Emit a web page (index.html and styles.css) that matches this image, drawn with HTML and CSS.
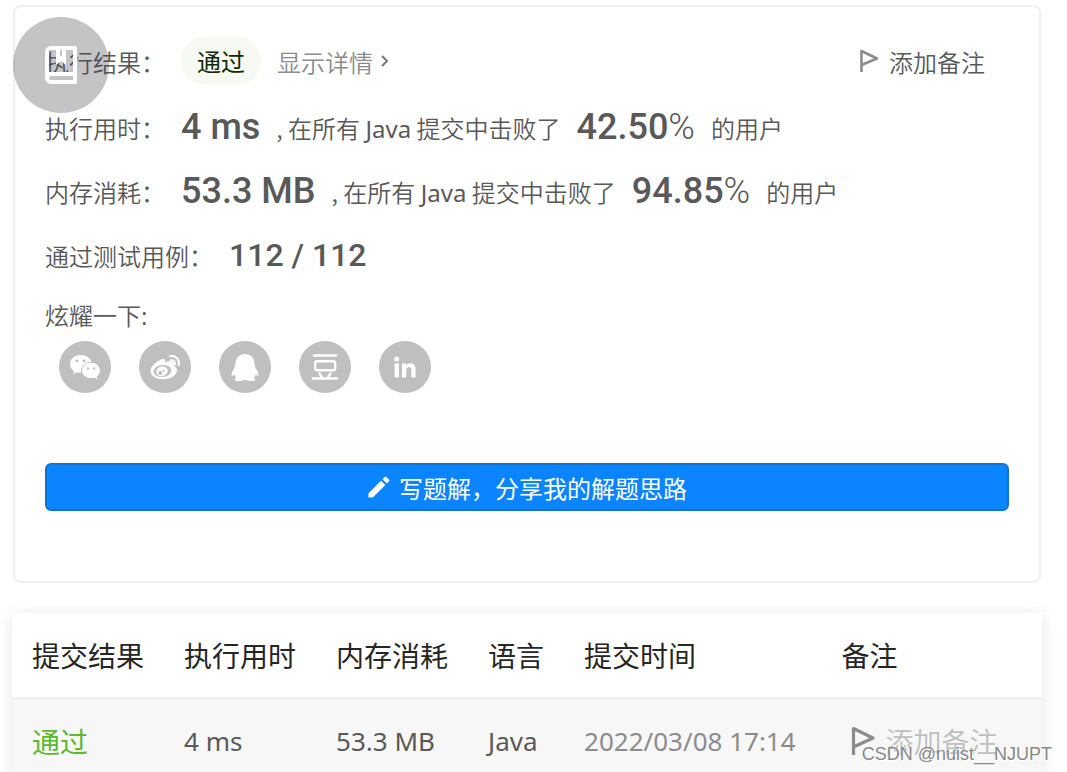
FILE: index.html
```html
<!DOCTYPE html>
<html lang="zh-CN">
<head>
    <meta charset="UTF-8">
    <meta name="viewport" content="width=device-width, initial-scale=1.0">
    <title>提交记录</title>
    <link rel="stylesheet" href="styles.css">
</head>
<body>
    <section class="result">
        <div class="row first">
            <span class="label">执行结果：</span>
            <span class="status">通过</span>
            <a class="detail" href="#">显示详情
                <svg width="8" height="14" viewBox="0 0 8 14"><path d="M1 2l5 5-5 5" fill="none" stroke="#777" stroke-width="2"/></svg>
            </a>
            <button class="remark" type="button">
                <svg width="20" height="26" viewBox="0 0 20 26"><path d="M2.500 24V3L18 10.500 2.500 17" fill="none" stroke="#8c8c8c" stroke-width="2.600" stroke-linejoin="round"/></svg>
                添加备注
            </button>
        </div>
        <div class="row">
            <span class="label">执行用时：</span>
            <strong>4 ms</strong>
            <span>, 在所有 <span class="lang">Java</span> 提交中击败了</span>
            <strong>42.50<i>%</i></strong>
            <span>的用户</span>
        </div>
        <div class="row">
            <span class="label">内存消耗：</span>
            <strong>53.3 MB</strong>
            <span>, 在所有 <span class="lang">Java</span> 提交中击败了</span>
            <strong>94.85<i>%</i></strong>
            <span>的用户</span>
        </div>
        <div class="row">
            <span class="label">通过测试用例：</span>
            <strong class="cases">112 / 112</strong>
        </div>
        <div class="share-title">炫耀一下:</div>
        <div class="share">
            <a href="#" aria-label="微信">
                <svg viewBox="0 0 52 52">
                    <path d="M21.500 14c-6 0-10.500 4-10.500 9 0 3 1.500 5.500 4 7l-1 3.500 4-2.200c1.300.4 2.600.6 4 .5-1-6 4-11 10.500-11C31.300 16.800 27 14 21.500 14z"/>
                    <path d="M32 21.800c-5 0-9 3.400-9 7.700s4 7.600 9 7.600c1.200 0 2.300-.1 3.300-.5l3.200 1.900-.8-3c2-1.400 3.300-3.500 3.300-6 0-4.300-4-7.700-9-7.700z"/>
                    <g fill="#bfbfbf"><circle cx="18" cy="20" r="1.400"/><circle cx="25" cy="20" r="1.400"/><circle cx="29" cy="27.500" r="1.200"/><circle cx="35" cy="27.500" r="1.200"/></g>
                </svg>
            </a>
            <a href="#" aria-label="微博">
                <svg viewBox="0 0 52 52">
                    <path d="M21 19c3-1.600 5-1.300 5.300.5.200 1-.2 2-.2 2 3-1.300 7-2 8.500.2.800 1.200.2 2.900 0 3.400 2 .7 3.400 2 3.400 4.200 0 5-6.500 9-14 9-7 0-12.500-3.300-12.500-8.500C11.500 26 16 21.500 21 19z"/>
                    <ellipse cx="23.500" cy="30" rx="9" ry="6" transform="rotate(-7 23.500 30)" fill="#bfbfbf"/>
                    <ellipse cx="23" cy="30.300" rx="5.800" ry="4.800" transform="rotate(-20 23 30.300)"/>
                    <circle cx="21.300" cy="32" r="2" fill="#bfbfbf"/><circle cx="24.500" cy="30" r="1" fill="#bfbfbf"/>
                    <path d="M31 15.300c5.500-1.400 10 3.300 8.600 9M31.500 19.500c3-.7 5 1.400 4.300 4.200" fill="none" stroke="#fff" stroke-width="2" stroke-linecap="round"/>
                </svg>
            </a>
            <a href="#" aria-label="QQ">
                <svg viewBox="0 0 52 52"><path d="M26 13c-5.500 0-9.500 4-9.500 9.500 0 1-.2 1.600-.7 2.500-.2 1-.2 1.300-.2 2-2.300 3-3.200 5.500-3 7.500.2 1.300 1.300.6 2.500-1.200.5 1.500 1.200 2.800 2.300 3.800-1.400.5-2 1.200-1.800 2 .5 1.300 7 1.400 10.400-.3 3.400 1.700 9.900 1.600 10.400.3.200-.8-.4-1.500-1.800-2 1.100-1 1.800-2.300 2.300-3.800 1.200 1.800 2.300 2.500 2.500 1.200.2-2-.7-4.500-3-7.500 0-.7 0-1-.2-2-.5-.9-.7-1.500-.7-2.500C35.500 17 31.500 13 26 13z"/></svg>
            </a>
            <a href="#" aria-label="豆瓣">
                <svg viewBox="0 0 52 52"><g fill="none" stroke="#fff" stroke-width="2.400" stroke-linecap="round"><path d="M15 14.500h22M14 37.500h24M20.500 32.500l2.500 4M31.500 32.500l-2.500 4"/><rect x="16.200" y="20.200" width="20" height="9" rx="2"/></g></svg>
            </a>
            <a href="#" aria-label="领英">
                <svg viewBox="0 0 52 52"><circle cx="17.700" cy="18" r="2.500"/><path d="M15.600 22.500h4.300V36.500h-4.300zM23 22.500h4v2c2.500-3.800 9.600-3.200 9.600 3.700v8.300h-4.300v-7.700c0-4-5-3.500-5 .2v7.500H23z"/></svg>
            </a>
        </div>
        <button class="write" type="button">
            <svg width="24" height="24" viewBox="0 0 24 24"><path d="M1.500 18.200V22.500h4.300L18.300 10 14 5.700zM22 6.300a1.200 1.200 0 000-1.700L19.400 2a1.200 1.200 0 00-1.700 0l-2.200 2.200 4.300 4.300z" fill="#fff"/></svg>
            写题解，分享我的解题思路
        </button>
        <button class="bookmark" type="button" aria-label="收藏">
            <svg width="32" height="38" viewBox="0 0 32 38">
                <path d="M6 0h24a2 2 0 012 2v34a2 2 0 01-2 2H6a6 6 0 01-6-6V6a6 6 0 016-6zM4 4v22h24V4h-7v15l-5-4-5 4V4zM6 30a2 2 0 000 4h22v-4zM15 4h2v6h-2z" fill="#fff" fill-rule="evenodd"/>
            </svg>
        </button>
    </section>

    <table class="records">
        <thead>
            <tr>
                <th>提交结果</th>
                <th>执行用时</th>
                <th>内存消耗</th>
                <th>语言</th>
                <th>提交时间</th>
                <th class="last">备注</th>
            </tr>
        </thead>
        <tbody>
            <tr>
                <td><a class="pass" href="#">通过</a></td>
                <td class="en">4 ms</td>
                <td class="en">53.3 MB</td>
                <td class="en">Java</td>
                <td class="en time">2022/03/08 17:14</td>
                <td>
                    <button class="remark small" type="button">
                        <svg width="26" height="32" viewBox="0 0 26 32"><path d="M3.500 30V3.500L23 13 3.500 22" fill="none" stroke="#8c8c8c" stroke-width="3.200" stroke-linejoin="round"/></svg>
                        添加备注
                    </button>
                </td>
            </tr>
        </tbody>
    </table>
    <div class="watermark">CSDN @nuist__NJUPT</div>
</body>
</html>
```
FILE: styles.css
```css
*{
    margin: 0;
    padding: 0;
    box-sizing: border-box;
}
html{
    height: 100%;
    overflow: hidden;
}
body{
    position: relative;
    height: 100%;
    background-color: #fff;
    color: #595959;
    font-family: "Noto Sans CJK SC", sans-serif;
    font-weight: 350;
    font-size: 24px;
}
a{
    text-decoration: none;
}
button{
    border: none;
    background: none;
    font: inherit;
    color: inherit;
    cursor: pointer;
}

/* 执行结果 */
.result{
    position: relative;
    margin: 5px 26px 0 13px;
    padding: 24px 30px 70px;
    border: 2px solid #f0f0f0;
    border-radius: 8px;
}
.row{
    display: flex;
    align-items: center;
    gap: 16px;
    height: 64px;
    white-space: nowrap;
}
.first{
    height: 60px;
    margin-bottom: 4px;
}
.row strong{
    font-family: Roboto, "Liberation Sans", sans-serif;
    font-size: 36px;
    font-weight: 500;
    line-height: 48px;
}
.row .cases{
    font-size: 32px;
}
.row strong i{
    font-style: normal;
    font-weight: 300;
}
.lang{
    font-family: "Noto Sans", sans-serif;
    font-size: 24px;
    font-weight: 400;
}
.status{
    padding: 0 16px;
    border-radius: 24px;
    background-color: #f6faf3;
    color: #0f2a05;
    font-weight: 400;
    line-height: 48px;
}
.detail{
    display: flex;
    align-items: center;
    gap: 8px;
    color: #8c8c8c;
}
.remark{
    display: flex;
    align-items: center;
    gap: 10px;
}
.row .remark{
    margin-left: auto;
    margin-right: 24px;
}
.share-title{
    padding-top: 4px;
    line-height: 48px;
}
.share{
    display: flex;
    gap: 28px;
    margin-top: 2px;
    padding: 0 14px;
}
.share a{
    width: 52px;
    height: 52px;
    border-radius: 50%;
    background-color: #bfbfbf;
}
.share svg{
    display: block;
    fill: #fff;
}
.write{
    display: flex;
    align-items: center;
    justify-content: center;
    gap: 8px;
    width: 100%;
    height: 48px;
    margin-top: 70px;
    border: 2px solid #1173d4;
    border-radius: 6px;
    background-color: #0a84ff;
    color: #fff;
    font-weight: 400;
}
.bookmark{
    position: absolute;
    top: 10px;
    left: -2px;
    display: flex;
    align-items: center;
    justify-content: center;
    width: 96px;
    height: 96px;
    border-radius: 50%;
    background-color: rgba(60, 60, 67, .3);
}

/* 提交记录 */
.records{
    width: calc(100% - 37px);
    margin: 30px 25px 0 12px;
    border-collapse: collapse;
    box-shadow: 0 2px 16px rgba(0, 0, 0, .1);
    font-size: 28px;
    line-height: 40px;
    text-align: left;
    white-space: nowrap;
}
.records th{
    height: 85px;
    padding: 0 20px;
    border-bottom: 2px solid #f0f0f0;
    background-color: #fff;
    color: #262626;
    font-weight: 400;
}
.records td{
    height: 84px;
    padding: 0 20px;
    background-color: #f7f7f7;
}
.records .last{
    width: 100%;
}
.records .en{
    font-family: "Noto Sans", sans-serif;
    font-size: 26px;
    font-weight: 400;
}
.records .pass{
    color: #5cb82c;
    font-weight: 400;
}
.records .time{
    padding-right: 26px;
    color: #8c8c8c;
}
.small{
    padding-left: 8px;
    color: #bfbfbf;
}
.watermark{
    position: absolute;
    right: 15px;
    bottom: 6px;
    color: #888;
    font-family: "Liberation Sans", sans-serif;
    font-size: 18px;
    font-weight: 400;
    line-height: 24px;
    text-shadow: 1px 1px 0 #fff;
}
```
